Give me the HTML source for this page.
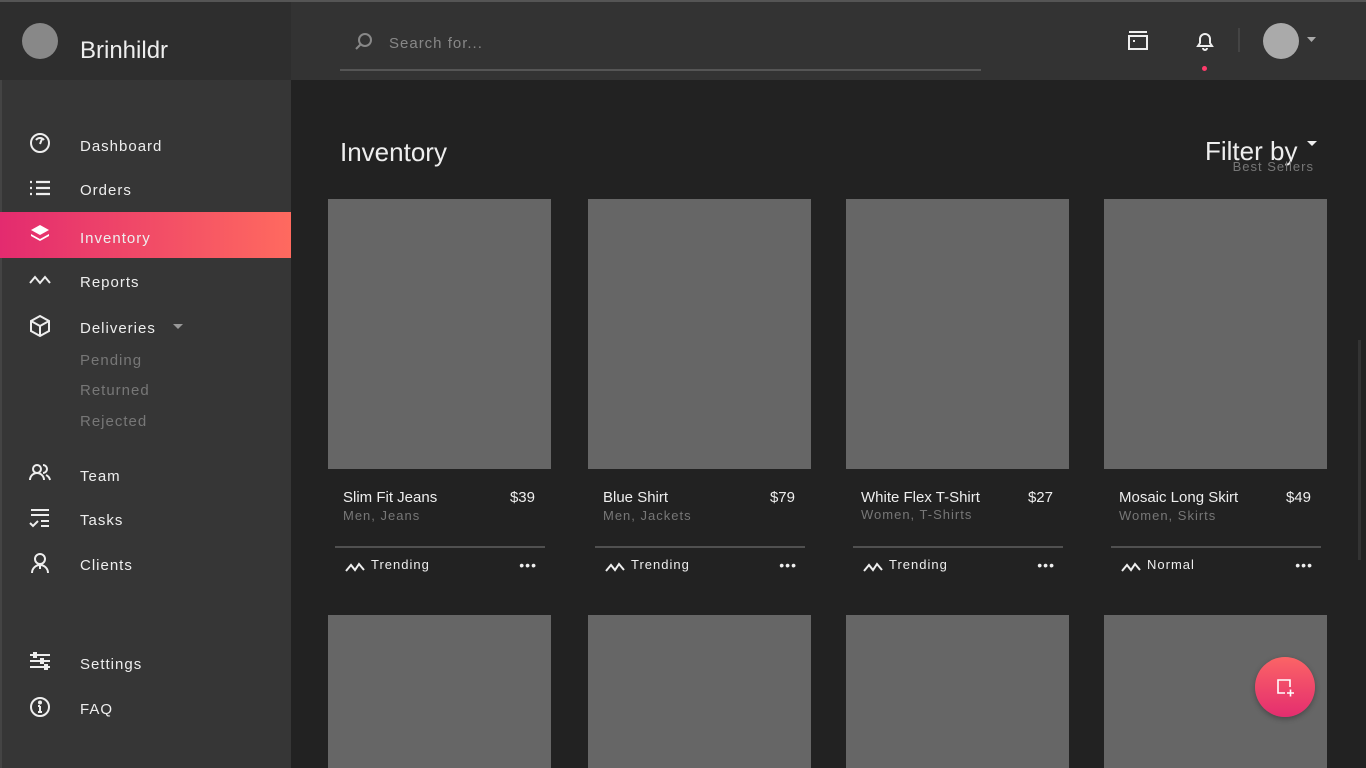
<!DOCTYPE html>
<html style="width:1366px;height:768px;overflow:hidden"><head><meta charset="utf-8"><style>
*{margin:0;padding:0;box-sizing:border-box}
body{width:1366px;height:768px;overflow:hidden;background:#222;font-family:"Liberation Sans","DejaVu Sans",sans-serif;position:relative;color:#eee}
.side{position:absolute;left:0;top:0;width:291px;height:768px;background:#363636;border-left:2px solid #444;border-top:2px solid #555}
.brand{position:absolute;left:0;top:0;width:291px;height:80px;background:#2e2e2e;border-top:2px solid #555}
.logo{position:absolute;left:22px;top:21px;width:36px;height:36px;border-radius:50%;background:#888}
.bname{position:absolute;left:80px;top:35px;font-size:24px;color:#eee}
.nav{position:absolute;left:80px;font-size:15px;letter-spacing:1px;color:#eee}
.sub{color:#777}
.ic{position:absolute;left:28px;width:24px;height:24px}
.act{position:absolute;left:0;top:212px;width:291px;height:46px;background:linear-gradient(90deg,#e32b6f,#ff6a5f)}
.top{position:absolute;left:291px;top:0;width:1075px;height:80px;background:#333;border-top:2px solid #555}
.search{position:absolute;left:340px;top:69px;width:641px;height:2px;background:#555}
.stext{position:absolute;left:389px;top:35px;font-size:15px;color:#888;letter-spacing:1px}
h1{position:absolute;left:340px;top:137px;font-size:26px;font-weight:normal;color:#eee}
.card{position:absolute;width:223px}
.img{width:223px;height:270px;background:#666}
.t{position:absolute;top:290px;left:15px;font-size:15px;color:#eee}
.p{position:absolute;top:290px;right:16px;font-size:15px;color:#eee}
.s{position:absolute;top:309px;left:15px;font-size:13px;color:#777;letter-spacing:1px}
.ln{position:absolute;top:347px;left:7px;width:210px;height:2px;background:#505050}
.tr{position:absolute;top:358px;left:43px;font-size:13px;color:#eee;letter-spacing:1px}
.dots{position:absolute;top:358px;right:14px;font-size:14px;color:#eee;letter-spacing:1px}
.wi{position:absolute;top:361px;left:17px}
</style></head><body>
<div class="side"></div>
<div class="brand"><div class="logo"></div><div class="bname">Brinhildr</div></div>
<div class="act"></div>
<svg class="ic" style="top:131px" viewBox="0 0 24 24" fill="none" stroke="#eee" stroke-width="2"><circle cx="12" cy="12" r="9"/><path d="M12 13l2-5M8 9a5 5 0 0 1 8 0"/></svg>
<div class="nav" style="top:138px">Dashboard</div>
<svg class="ic" style="top:176px" viewBox="0 0 24 24" fill="none" stroke="#eee" stroke-width="2.2"><path d="M2 6h2M8 6h14M2 12h2M8 12h14M2 18h2M8 18h14"/></svg>
<div class="nav" style="top:182px">Orders</div>
<svg class="ic" style="top:222px" viewBox="0 0 24 24" fill="#fff"><path d="M12 3l9 5-9 5-9-5z"/><path d="M3 12l9 5 9-5v2l-9 5-9-5z"/></svg>
<div class="nav" style="top:230px">Inventory</div>
<svg class="ic" style="top:268px" viewBox="0 0 24 24" fill="none" stroke="#eee" stroke-width="2"><path d="M2 15l5-6 5 6 5-6 5 6"/></svg>
<div class="nav" style="top:274px">Reports</div>
<svg class="ic" style="top:314px" viewBox="0 0 24 24" fill="none" stroke="#eee" stroke-width="2"><path d="M12 2l9 5v10l-9 5-9-5V7zM3 7l9 5 9-5M12 12v10"/></svg>
<div class="nav" style="top:320px">Deliveries</div>
<svg style="position:absolute;left:173px;top:324px" width="10" height="6"><path d="M0 0h10L5 5z" fill="#999"/></svg>
<div class="nav sub" style="top:352px">Pending</div>
<div class="nav sub" style="top:382px">Returned</div>
<div class="nav sub" style="top:413px">Rejected</div>
<svg class="ic" style="top:461px" viewBox="0 0 24 24" fill="none" stroke="#eee" stroke-width="2"><circle cx="9" cy="8" r="4"/><path d="M2 19a7 7 0 0 1 14 0M15 4a4 4 0 0 1 0 8M18 14a7 7 0 0 1 4 5"/></svg>
<div class="nav" style="top:468px">Team</div>
<svg class="ic" style="top:506px" viewBox="0 0 24 24" fill="none" stroke="#eee" stroke-width="2"><path d="M3 4h18M3 9h18M13 15h8M13 20h8M2 17l3 3 5-5"/></svg>
<div class="nav" style="top:512px">Tasks</div>
<svg class="ic" style="top:551px" viewBox="0 0 24 24" fill="none" stroke="#eee" stroke-width="2"><circle cx="12" cy="8" r="5"/><path d="M4 22a8 8 0 0 1 16 0M12 13v5"/></svg>
<div class="nav" style="top:557px">Clients</div>
<svg class="ic" style="top:650px" viewBox="0 0 24 24" fill="none" stroke="#eee" stroke-width="2"><path d="M2 5h20M2 11h20M2 17h20"/><rect x="6" y="3" width="2" height="4" fill="#eee"/><rect x="13" y="9" width="2" height="4" fill="#eee"/><rect x="17" y="15" width="2" height="4" fill="#eee"/></svg>
<div class="nav" style="top:656px">Settings</div>
<svg class="ic" style="top:695px" viewBox="0 0 24 24" fill="none" stroke="#eee" stroke-width="2"><circle cx="12" cy="12" r="9"/><path d="M12 11v6M10 17h4M10 11h2"/><circle cx="12" cy="7.5" r="1" fill="#eee"/></svg>
<div class="nav" style="top:701px">FAQ</div>

<div class="top"></div>
<svg style="position:absolute;left:353px;top:31px" width="22" height="22" viewBox="0 0 22 22" fill="none" stroke="#888" stroke-width="2"><circle cx="12" cy="9" r="6"/><path d="M8 13l-5 5"/></svg>
<div class="stext">Search for...</div>
<div class="search"></div>
<svg style="position:absolute;left:1127px;top:30px" width="22" height="22" viewBox="0 0 22 22" fill="none" stroke="#eee" stroke-width="2"><path d="M2 2h18"/><rect x="2" y="6" width="18" height="13"/><rect x="6" y="10" width="2" height="2" fill="#eee" stroke="none"/></svg>
<svg style="position:absolute;left:1194px;top:30px" width="22" height="22" viewBox="0 0 22 22" fill="none" stroke="#eee" stroke-width="2"><path d="M4 16h14l-2-3V9a5 5 0 0 0-10 0v4zM9 18a2 2 0 0 0 4 0"/></svg>
<div style="position:absolute;left:1202px;top:66px;width:5px;height:5px;border-radius:50%;background:#ff3b6b"></div>
<div style="position:absolute;left:1238px;top:28px;width:2px;height:24px;background:#444"></div>
<div style="position:absolute;left:1263px;top:23px;width:36px;height:36px;border-radius:50%;background:#aaa"></div>
<svg style="position:absolute;left:1307px;top:37px" width="9" height="6"><path d="M0 0h9L4.5 5z" fill="#aaa"/></svg>

<h1>Inventory</h1>
<div style="position:absolute;left:1205px;top:136px;font-size:26px;color:#eee">Filter by</div>
<svg style="position:absolute;left:1307px;top:141px" width="10" height="6"><path d="M0 0h10L5 5z" fill="#eee"/></svg>
<div style="position:absolute;right:52px;top:159px;font-size:13px;color:#777;letter-spacing:1px">Best Sellers</div>

<div class="card" style="left:328px;top:199px"><div class="img"></div><div class="t">Slim Fit Jeans</div><div class="p">$39</div><div class="s">Men, Jeans</div><div class="ln"></div><svg class="wi" width="20" height="12" viewBox="0 0 20 12" fill="none" stroke="#eee" stroke-width="2"><path d="M1 11l5-6 4 5 4-6 5 6"/></svg><div class="tr">Trending</div><div class="dots">•••</div></div>
<div class="card" style="left:588px;top:199px"><div class="img"></div><div class="t">Blue Shirt</div><div class="p">$79</div><div class="s">Men, Jackets</div><div class="ln"></div><svg class="wi" width="20" height="12" viewBox="0 0 20 12" fill="none" stroke="#eee" stroke-width="2"><path d="M1 11l5-6 4 5 4-6 5 6"/></svg><div class="tr">Trending</div><div class="dots">•••</div></div>
<div class="card" style="left:846px;top:199px"><div class="img"></div><div class="t">White Flex T-Shirt</div><div class="p">$27</div><div class="s" style="top:308px">Women, T-Shirts</div><div class="ln"></div><svg class="wi" width="20" height="12" viewBox="0 0 20 12" fill="none" stroke="#eee" stroke-width="2"><path d="M1 11l5-6 4 5 4-6 5 6"/></svg><div class="tr">Trending</div><div class="dots">•••</div></div>
<div class="card" style="left:1104px;top:199px"><div class="img"></div><div class="t">Mosaic Long Skirt</div><div class="p">$49</div><div class="s">Women, Skirts</div><div class="ln"></div><svg class="wi" width="20" height="12" viewBox="0 0 20 12" fill="none" stroke="#eee" stroke-width="2"><path d="M1 11l5-6 4 5 4-6 5 6"/></svg><div class="tr">Normal</div><div class="dots">•••</div></div>

<div class="card" style="left:328px;top:615px"><div class="img" style="height:153px"></div></div>
<div class="card" style="left:588px;top:615px"><div class="img" style="height:153px"></div></div>
<div class="card" style="left:846px;top:615px"><div class="img" style="height:153px"></div></div>
<div class="card" style="left:1104px;top:615px"><div class="img" style="height:153px"></div></div>
<div style="position:absolute;left:1358px;top:340px;width:3px;height:220px;background:#333"></div>

<div style="position:absolute;left:1255px;top:657px;width:60px;height:60px;border-radius:50%;background:linear-gradient(180deg,#fb6466,#e42d6f);box-shadow:0 2px 6px rgba(0,0,0,.3)"></div>
<svg style="position:absolute;left:1276px;top:678px" width="20" height="20" viewBox="0 0 20 20" fill="none" stroke="#fff" stroke-width="1.6"><path d="M9 15H2V2h12v7M11 15h7M14.5 11.5v7"/></svg>
</body></html>
